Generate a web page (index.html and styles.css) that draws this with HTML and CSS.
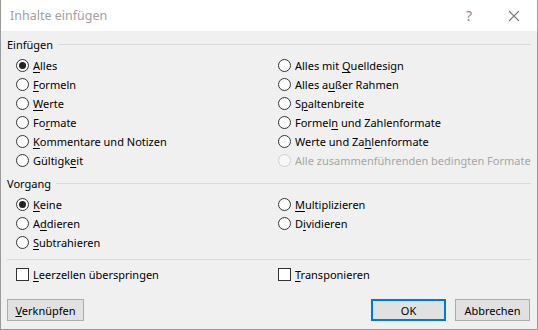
FILE: index.html
```html
<!DOCTYPE html>
<html>
  <head>
    <meta charset="utf-8">
    <title>Inhalte einfügen</title>
    <link rel="stylesheet" href="styles.css">
  </head>
  <body>
    <div class="dialog">

      <div class="titlebar">
        <span class="title">Inhalte einfügen</span>
        <span class="help">?</span>
        <svg class="close" width="12" height="12" viewBox="0 0 12 12">
          <path d="M1 1 L11 11 M11 1 L1 11" stroke="#7a7a7a" stroke-width="1.1" fill="none" />
        </svg>
      </div>

      <div class="content">

        <div class="group-head">Einfügen</div>
        <div class="options">
          <label class="option"><span class="radio checked"></span><span><u>A</u>lles</span></label>
          <label class="option"><span class="radio"></span><span>Alles mit <u>Q</u>uelldesign</span></label>
          <label class="option"><span class="radio"></span><span><u>F</u>ormeln</span></label>
          <label class="option"><span class="radio"></span><span>Alles a<u>u</u>ßer Rahmen</span></label>
          <label class="option"><span class="radio"></span><span><u>W</u>erte</span></label>
          <label class="option"><span class="radio"></span><span>S<u>p</u>altenbreite</span></label>
          <label class="option"><span class="radio"></span><span>Fo<u>r</u>mate</span></label>
          <label class="option"><span class="radio"></span><span>Formel<u>n</u> und Zahlenformate</span></label>
          <label class="option"><span class="radio"></span><span><u>K</u>ommentare und Notizen</span></label>
          <label class="option"><span class="radio"></span><span>Werte und Za<u>h</u>lenformate</span></label>
          <label class="option"><span class="radio"></span><span>Gültigk<u>e</u>it</span></label>
          <label class="option disabled"><span class="radio"></span><span>Alle zusammenführenden bedingten Formate</span></label>
        </div>

        <div class="group-head second">Vorgang</div>
        <div class="options">
          <label class="option"><span class="radio checked"></span><span><u>K</u>eine</span></label>
          <label class="option"><span class="radio"></span><span><u>M</u>ultiplizieren</span></label>
          <label class="option"><span class="radio"></span><span>A<u>d</u>dieren</span></label>
          <label class="option"><span class="radio"></span><span>D<u>i</u>vidieren</span></label>
          <label class="option"><span class="radio"></span><span><u>S</u>ubtrahieren</span></label>
        </div>

        <div class="separator"></div>

        <div class="options checks">
          <label class="option"><span class="checkbox"></span><span><u>L</u>eerzellen überspringen</span></label>
          <label class="option"><span class="checkbox"></span><span><u>T</u>ransponieren</span></label>
        </div>

        <div class="buttons">
          <button class="button"><u>V</u>erknüpfen</button>
          <span class="spacer"></span>
          <button class="button default">OK</button>
          <button class="button">Abbrechen</button>
        </div>

      </div>
    </div>
  </body>
</html>
```

FILE: styles.css
```css
body {
  margin: 0px;
  font-family: "Noto Sans", "Open Sans", sans-serif;
  font-size: 11px;
  color: #000;
}

.dialog {
  width: 538px;
  height: 330px;
  box-sizing: border-box;
  border: 1px solid #9a9a9a;
  border-top: none;
  background-color: #f0f0f0;
  display: flex;
  flex-direction: column;
}

.titlebar {
  height: 31px;
  background-color: #fff;
  display: flex;
  align-items: center;
  padding-left: 9px;
  padding-right: 17px;
}

.title {
  flex: 1;
  font-size: 12.5px;
  color: #a0a0a0;
}

.help {
  font-size: 14px;
  color: #8a8a8a;
  margin-right: 36px;
}

.close {
  display: block;
}

.content {
  padding: 6px 6px 0px 6px;
}

.group-head {
  display: flex;
  align-items: center;
  height: 16px;
  line-height: 16px;
  margin-bottom: 3px;
}

.group-head::after {
  content: "";
  flex: 1;
  height: 1px;
  background-color: #dadada;
  margin-left: 5px;
  margin-top: -1px;
}

.group-head.second {
  margin-top: 6px;
}

.options {
  display: grid;
  grid-template-columns: 262px 1fr;
  grid-auto-rows: 19px;
  padding-left: 9px;
}

.option {
  display: flex;
  align-items: center;
  gap: 4px;
  white-space: nowrap;
}

.option u {
  text-underline-offset: 2px;
}

.radio {
  width: 13px;
  height: 13px;
  box-sizing: border-box;
  border: 1px solid #333;
  border-radius: 50%;
  background-color: #fff;
  display: flex;
  align-items: center;
  justify-content: center;
  flex: none;
}

.radio.checked::after {
  content: "";
  width: 7px;
  height: 7px;
  border-radius: 50%;
  background-color: #222;
}

.disabled {
  color: #a6a6a6;
}

.disabled .radio {
  border-color: #cfcfcf;
  background-color: #f7f7f7;
}

.separator {
  height: 1px;
  background-color: #dadada;
  margin-top: 7px;
  margin-bottom: 5px;
}

.checkbox {
  width: 13px;
  height: 13px;
  box-sizing: border-box;
  border: 1px solid #333;
  background-color: #fff;
  flex: none;
}

.buttons {
  display: flex;
  gap: 9px;
  margin-top: 15px;
  padding-right: 1px;
}

.spacer {
  flex: 1;
}

.button {
  width: 75px;
  height: 22px;
  box-sizing: border-box;
  border: 1px solid #adadad;
  background-color: #e1e1e1;
  font-family: inherit;
  font-size: 11px;
  color: #000;
  padding: 0px;
}

.button:first-child {
  width: 77px;
}

.button.default {
  border: 2px solid #0078d7;
}
```
